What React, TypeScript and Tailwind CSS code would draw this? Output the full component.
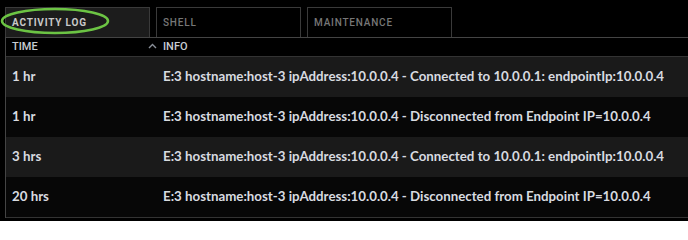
import React from 'react';

const tabs = [
  { label: 'ACTIVITY LOG', active: true },
  { label: 'SHELL', active: false },
  { label: 'MAINTENANCE', active: false },
];

const rows = [
  { time: '1 hr', info: 'E:3 hostname:host-3 ipAddress:10.0.0.4 - Connected to 10.0.0.1: endpointIp:10.0.0.4' },
  { time: '1 hr', info: 'E:3 hostname:host-3 ipAddress:10.0.0.4 - Disconnected from Endpoint IP=10.0.0.4' },
  { time: '3 hrs', info: 'E:3 hostname:host-3 ipAddress:10.0.0.4 - Connected to 10.0.0.1: endpointIp:10.0.0.4' },
  { time: '20 hrs', info: 'E:3 hostname:host-3 ipAddress:10.0.0.4 - Disconnected from Endpoint IP=10.0.0.4' },
];

export default function App() {
  return (
    <div className="relative w-[688px] h-[221px] bg-black overflow-hidden pt-[7px] pl-[5px]">
      {/* tabs */}
      <div className="flex gap-[6px] h-[30px]">
        {tabs.map((t, i) => (
          <div
            key={i}
            className={`w-[145px] h-[30px] border border-b-0 border-[#3a3a3a] flex items-center pl-[6px] text-[10px] tracking-[0.8px] font-['Roboto',sans-serif] ${
              t.active ? 'bg-[#1c1c1c] text-[#c8c8c8] font-bold' : 'bg-black text-[#777] font-medium'
            }`}
          >
            {t.label}
          </div>
        ))}
      </div>

      {/* table */}
      <div className="border-l border-t border-[#444] w-[720px]">
        <div className="flex items-center h-[19px] border-b border-[#333] font-['Roboto',sans-serif] text-[11px] font-medium text-[#c8ccd2]">
          <div className="w-[157px] flex items-center justify-between pl-[6px] pr-[6px]">
            <span>TIME</span>
            <svg width="9" height="6" viewBox="0 0 9 6" className="mt-[-2px]">
              <path d="M1 5 L4.5 1.5 L8 5" fill="none" stroke="#8a9099" strokeWidth="1.4" />
            </svg>
          </div>
          <span>INFO</span>
        </div>
        {rows.map((r, i) => (
          <div
            key={i}
            className={`flex items-center h-[40px] font-['Lato',sans-serif] font-bold text-[13.3px] text-[#d8dbe0] ${
              i % 2 === 0 ? 'bg-[#1a1a1a]' : 'bg-[#070707]'
            }`}
          >
            <div className="w-[157px] pl-[6px]">{r.time}</div>
            <div className="whitespace-nowrap">{r.info}</div>
          </div>
        ))}
        <div className="border-t border-[#333]" />
      </div>

      {/* annotation */}
      <svg className="absolute left-0 top-0 pointer-events-none" width="120" height="40">
        <ellipse cx="55" cy="21" rx="53" ry="12" fill="none" stroke="#6cc444" strokeWidth="2.5" />
      </svg>
    </div>
  );
}
